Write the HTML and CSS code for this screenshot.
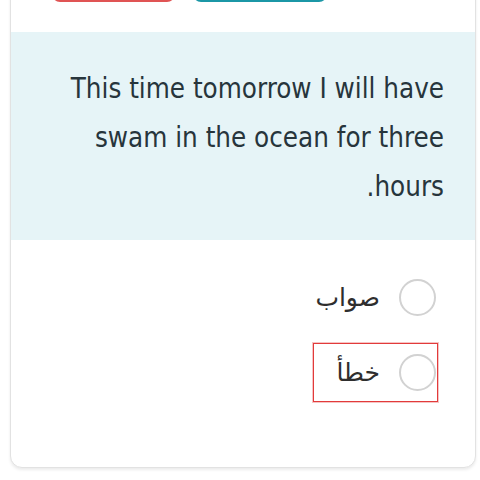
FILE: index.html
```html
<!DOCTYPE html>
<html lang="en">
<head>
<meta charset="utf-8">
<link rel="stylesheet" href="styles.css">
</head>
<body>
<div class="card">
  <div class="actions">
    <span class="btn btn-red"></span>
    <span class="btn btn-teal"></span>
  </div>
  <div class="question" dir="rtl">
    <p class="q-text">This time tomorrow I will have swam in the ocean for three hours.</p>
  </div>
  <div class="options" dir="rtl">
    <label class="option">
      <span class="radio"></span>
      <span class="opt-label" lang="ar">صواب</span>
    </label>
    <label class="option selected">
      <span class="radio"></span>
      <span class="opt-label" lang="ar">خطأ</span>
    </label>
  </div>
</div>
</body>
</html>
```
FILE: styles.css
```css
html, body {
  margin: 0;
  padding: 0;
  background: #ffffff;
  overflow: hidden;
}
body {
  width: 480px;
  height: 480px;
  font-family: "DejaVu Sans Condensed", "Liberation Sans", sans-serif;
}
.card {
  margin: -50px 4px 0 10px;
  background: #ffffff;
  border: 1px solid #e2e2e2;
  border-radius: 12px;
  box-shadow: 0 2px 3px rgba(0, 0, 0, 0.08);
  overflow: hidden;
}
.actions {
  display: flex;
  gap: 18px;
  padding: 8px 0 30px 41px;
}
.btn {
  display: block;
  height: 43px;
  border-radius: 8px;
}
.btn-red {
  width: 123px;
  background: #e05454;
}
.btn-teal {
  width: 134px;
  background: #1b97a6;
}
.question {
  background: #e6f4f7;
  padding: 32px 31px 29px 34px;
}
.q-text {
  margin: 0;
  font-size: 27.5px;
  line-height: 49px;
  color: #27353c;
  text-align: right;
}
.options {
  display: flex;
  flex-direction: column;
  align-items: flex-start;
  gap: 16px;
  padding: 28px 37px 65px 0;
}
.option {
  display: flex;
  align-items: center;
  gap: 19px;
  height: 37px;
  padding: 10px 1px 10px 22px;
  border: 1px solid transparent;
}
.option.selected {
  border-color: #e23b3b;
  box-shadow: 0 0 0 1px rgba(226, 59, 59, 0.3);
}
.radio {
  width: 33px;
  height: 33px;
  border: 2px solid #d2d2d2;
  border-radius: 50%;
  box-sizing: content-box;
}
.opt-label {
  font-family: "DejaVu Sans", "Noto Sans", sans-serif;
  font-size: 25px;
  line-height: 37px;
  color: #2e2e2e;
}
```
